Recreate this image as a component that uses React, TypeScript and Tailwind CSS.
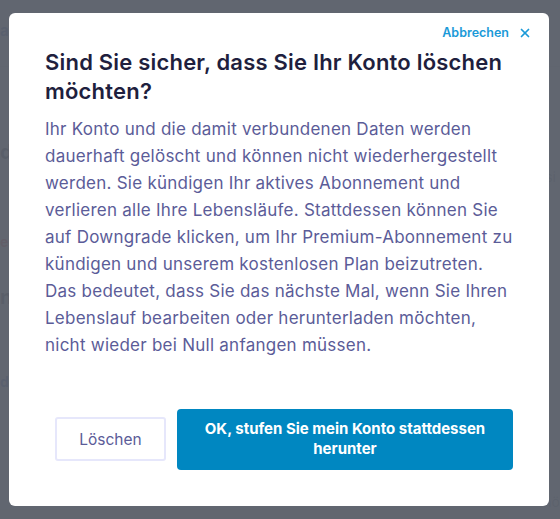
import { X } from "lucide-react";

const bodyLines = [
  "Ihr Konto und die damit verbundenen Daten werden",
  "dauerhaft gelöscht und können nicht wiederhergestellt",
  "werden. Sie kündigen Ihr aktives Abonnement und",
  "verlieren alle Ihre Lebensläufe. Stattdessen können Sie",
  "auf Downgrade klicken, um Ihr Premium-Abonnement zu",
  "kündigen und unserem kostenlosen Plan beizutreten.",
  "Das bedeutet, dass Sie das nächste Mal, wenn Sie Ihren",
  "Lebenslauf bearbeiten oder herunterladen möchten,",
  "nicht wieder bei Null anfangen müssen.",
];

export default function App() {
  return (
    <div className="relative h-[519px] w-[560px] overflow-hidden bg-white font-['Inter',sans-serif]">
      {/* page behind the overlay, only its edges show */}
      <div className="h-full pt-[20px] text-[15px]">
        <div className="h-[47px] border-b border-gray-300 font-bold text-blue-800">at</div>
        <div className="mt-[70px] text-[20px] font-bold text-gray-900">d</div>
        <div className="flex justify-end pr-1 text-sm text-gray-500">si</div>
        <div className="mt-[45px] text-sm font-bold text-red-600">e</div>
        <div className="mt-[30px] text-[20px] font-bold text-gray-900">n</div>
        <div className="mt-[60px] text-sm font-bold text-blue-800">d</div>
        <div className="mt-[100px] flex justify-end text-sm text-gray-500">nö</div>
      </div>

      {/* overlay */}
      <div className="absolute inset-0 bg-[#5c616b]/[0.97] px-[9px] pt-[13px]">
        <div className="flex h-[493px] w-[540px] flex-col rounded-[6px] bg-white pl-[36px] pr-[17px] pt-[11px]">
          <div className="flex items-center justify-end gap-[9px]">
            <span className="text-[12.5px] font-semibold text-[#1b9ad8]">Abbrechen</span>
            <X className="h-[14px] w-[14px] text-[#1b9ad8]" strokeWidth={3} />
          </div>
          <h2 className="mt-[5px] text-[22px] font-semibold leading-[29px] tracking-[0.2px] text-[#1f1f3e]">
            Sind Sie sicher, dass Sie Ihr Konto löschen
            <br />
            möchten?
          </h2>
          <p className="mt-[10px] whitespace-nowrap text-[17px] leading-[27px] tracking-[0.25px] text-[#5b5c98]">
            {bodyLines.map((line) => (
              <span key={line} className="block">
                {line}
              </span>
            ))}
          </p>
          <div className="mt-[50px] flex items-center gap-[11px] pl-[10px]">
            <button className="h-[44px] w-[111px] rounded-[3px] border-2 border-[#e6e7fb] text-[15.5px] text-[#5b5c98]">
              Löschen
            </button>
            <button className="h-[61px] w-[336px] rounded-[4px] bg-[#0087c1] px-4 text-[15px] font-bold leading-[20px] text-white">
              OK, stufen Sie mein Konto stattdessen
              <br />
              herunter
            </button>
          </div>
        </div>
      </div>
    </div>
  );
}
